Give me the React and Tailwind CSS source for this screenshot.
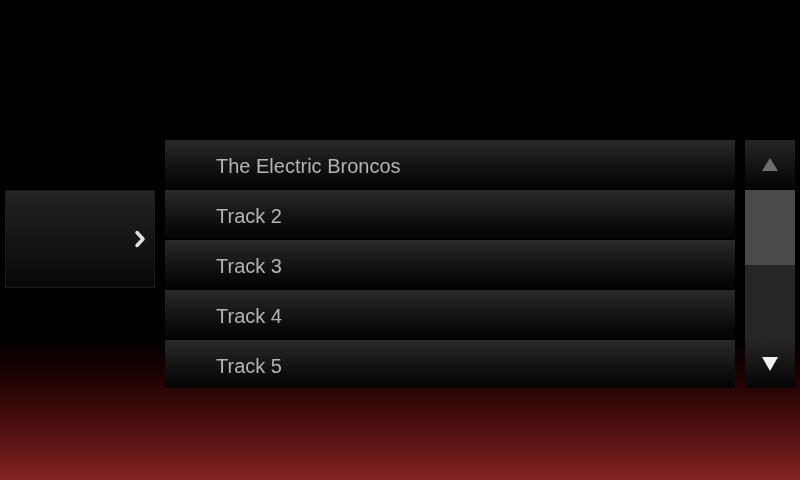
const tracks = ['The Electric Broncos', 'Track 2', 'Track 3', 'Track 4', 'Track 5'];

export default function App() {
  return (
    <div
      className="h-[480px] w-[800px] overflow-hidden bg-linear-to-b from-black from-[65%] to-[#842222] blur-[0.6px]"
      style={{ fontFamily: '"Liberation Sans", Arial, sans-serif' }}
    >
      <div className="flex pl-[5px] pt-[140px]">
        <div className="mt-[50px] flex h-[98px] w-[150px] items-center justify-end border border-[#1c1c1c] bg-linear-to-b from-[#232323] to-[#080808] pr-[7px]">
          <svg width="14" height="20" viewBox="0 0 14 20">
            <path d="M4 3.5 L10 10 L4 16.5" fill="none" stroke="#e0e0e0" strokeWidth="3.5" strokeLinejoin="round" strokeLinecap="round" />
          </svg>
        </div>

        <div className="ml-[10px] flex w-[570px] flex-col gap-[2px]">
          {tracks.map((t) => (
            <div
              key={t}
              className="flex h-[48px] items-center bg-linear-to-b from-[#2a2a2a] to-[#040404] pl-[51px] pt-[3px] text-[20px] text-[#b4b4b4]"
            >
              {t}
            </div>
          ))}
        </div>

        <div className="ml-[10px] flex h-[248px] w-[50px] flex-col">
          <div className="flex h-[48px] items-center justify-center bg-linear-to-b from-[#262626] to-[#060606]">
            <svg width="20" height="18" viewBox="0 0 20 18">
              <path d="M10 3 L18 16 L2 16 Z" fill="#6e6e6e" />
            </svg>
          </div>
          <div className="mt-[2px] h-[75px] bg-[#4a4a4a]" />
          <div className="flex-1 bg-[#262626]" />
          <div className="flex h-[48px] items-center justify-center bg-linear-to-b from-[#262626] to-[#060606]">
            <svg width="20" height="18" viewBox="0 0 20 18">
              <path d="M2 2 L18 2 L10 16 Z" fill="#f2f2f2" />
            </svg>
          </div>
        </div>
      </div>
    </div>
  );
}
